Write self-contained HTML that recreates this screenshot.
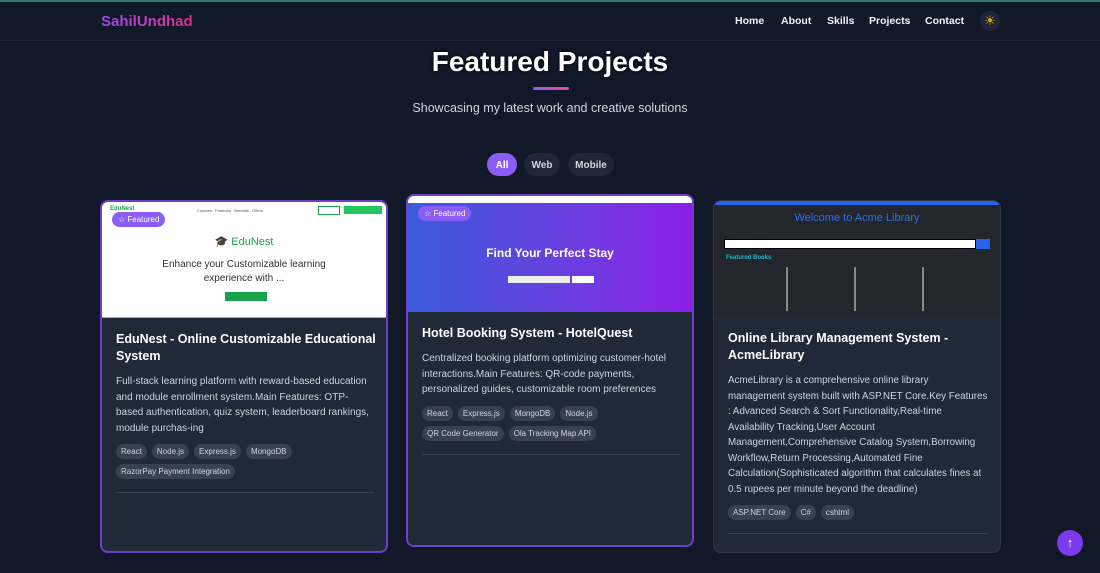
<!DOCTYPE html>
<html><head><meta charset="utf-8"><style>
*{box-sizing:border-box;margin:0;padding:0}
body{width:1100px;height:573px;overflow:hidden;background:#111827;font-family:"Liberation Sans",sans-serif;color:#e5e7eb;position:relative}
.topbar{position:absolute;top:0;left:0;right:0;height:2px;background:#2f7b7b}
.nav{position:absolute;top:2px;left:0;right:0;height:39px;border-bottom:1px solid #1f2636}
.logo{position:absolute;left:101px;top:11px;font-weight:bold;font-size:15px;background:linear-gradient(90deg,#9b4de8,#db2f8f);-webkit-background-clip:text;color:transparent}
.links{position:absolute;top:13px;font-size:10.5px;font-weight:bold;color:#f3f4f6;left:0}
.links span{position:absolute;white-space:nowrap}
.sun{position:absolute;left:980px;top:9px;width:20px;height:20px;border-radius:50%;background:#1f2637;color:#eab308;font-size:13px;text-align:center;line-height:20px}
h1{position:absolute;top:46px;left:0;right:0;text-align:center;font-size:28px;color:#fff;font-weight:bold;text-shadow:0 0 3px #000}
.ul{position:absolute;left:533px;top:87px;width:36px;height:3px;border-radius:2px;background:linear-gradient(90deg,#8b5cf6,#ec4899)}
.sub{position:absolute;top:101px;left:0;right:0;text-align:center;font-size:12.5px;color:#d1d5db}
.f{position:absolute;top:153px;height:23px;border-radius:12px;background:#1f2637;font-size:10px;font-weight:bold;color:#d1d5db;text-align:center;line-height:25px}
.card{position:absolute;width:288px;height:353px;background:#1f2937;border-radius:8px;overflow:hidden;border:1px solid #2d3748}
.card.p{border:2px solid #6d3fc7}
.img{position:absolute;left:0;top:0;right:0;height:116px;overflow:hidden}
.badge{position:absolute;left:10px;top:10px;background:#8b5cf6;color:#fff;font-size:8px;padding:3px 6px;border-radius:8px}
.body{position:absolute;left:14px;top:129px;right:12px}
.t{font-size:12.5px;font-weight:bold;color:#fff;line-height:17px;margin-bottom:9px;margin-right:-10px}
.d{font-size:10px;line-height:15.5px;color:#cbd5e1;margin-bottom:8px}
.tags{display:flex;flex-wrap:wrap;gap:5px}
.tags span{font-size:8px;background:#374151;color:#d1d5db;border-radius:8px;padding:3px 5px}
.hr{height:1px;background:#374151;margin-top:13px}
.top{position:absolute;left:1057px;top:530px;width:26px;height:26px;border-radius:50%;background:#7c3aed;color:#fff;text-align:center;line-height:26px;font-size:13px}
</style></head><body>
<div class="topbar"></div>
<div class="nav"><div class="logo">SahilUndhad</div>
<div class="links"><span style="left:735px">Home</span><span style="left:781px">About</span><span style="left:827px">Skills</span><span style="left:869px">Projects</span><span style="left:925px">Contact</span></div>
<div class="sun">☀</div></div>
<h1>Featured Projects</h1><div class="ul"></div>
<div class="sub">Showcasing my latest work and creative solutions</div>
<div class="f" style="left:487px;width:30px;background:#8b5cf6;color:#fff">All</div>
<div class="f" style="left:524px;width:36px">Web</div>
<div class="f" style="left:568px;width:46px">Mobile</div>

<div class="card p" style="left:100px;top:200px">
<div class="img" style="background:#fff;border-bottom:1px solid #aaa">
<div style="position:absolute;left:8px;top:4px;font-size:6px;color:#16a34a;font-weight:bold">EduNest</div>
<div style="position:absolute;left:95px;top:6px;font-size:4px;color:#555">Courses &nbsp; Features &nbsp; Benefits &nbsp; Offers</div>
<div style="position:absolute;left:216px;top:4px;width:22px;height:9px;border:1px solid #16a34a"></div>
<div style="position:absolute;left:242px;top:4px;width:38px;height:8px;background:#22c55e"></div>
<div style="position:absolute;left:0;right:0;top:33px;text-align:center;font-size:11px;color:#16a34a">🎓 EduNest</div>
<div style="position:absolute;left:40px;right:40px;top:56px;text-align:center;font-size:10px;line-height:14px;color:#333">Enhance your Customizable learning experience with ...</div>
<div style="position:absolute;left:123px;top:90px;width:42px;height:9px;background:#16a34a"></div>
<div class="badge">☆ Featured</div></div>
<div class="body"><div class="t">EduNest - Online Customizable Educational System</div>
<div class="d">Full-stack learning platform with reward-based education and module enrollment system.Main Features: OTP-based authentication, quiz system, leaderboard rankings, module purchas-ing</div>
<div class="tags"><span>React</span><span>Node.js</span><span>Express.js</span><span>MongoDB</span><span>RazorPay Payment Integration</span></div><div class="hr"></div></div></div>

<div class="card p" style="left:406px;top:194px">
<div class="img" style="background:linear-gradient(90deg,#3b5bdb,#6d3de0 60%,#8b1fe6)">
<div style="position:absolute;left:0;right:0;top:0;height:7px;background:#fff"></div>
<div style="position:absolute;left:0;right:0;top:50px;text-align:center;font-size:12px;font-weight:bold;color:#fff">Find Your Perfect Stay</div>
<div style="position:absolute;left:100px;top:80px;width:62px;height:7px;background:#eee"></div>
<div style="position:absolute;left:164px;top:80px;width:22px;height:7px;background:#fff"></div>
<div class="badge" style="top:10px">☆ Featured</div></div>
<div class="body"><div class="t">Hotel Booking System - HotelQuest</div>
<div class="d">Centralized booking platform optimizing customer-hotel interactions.Main Features: QR-code payments, personalized guides, customizable room preferences</div>
<div class="tags"><span>React</span><span>Express.js</span><span>MongoDB</span><span>Node.js</span><span>QR Code Generator</span><span>Ola Tracking Map API</span></div><div class="hr"></div></div></div>

<div class="card" style="left:713px;top:200px">
<div class="img" style="background:#23262d;border-top:4px solid #2563eb">
<div style="position:absolute;left:0;right:0;top:7px;text-align:center;font-size:11px;color:#2f6fe8">Welcome to Acme Library</div>
<div style="position:absolute;left:10px;top:34px;width:252px;height:10px;background:#fff;border:1px solid #000"></div>
<div style="position:absolute;left:262px;top:34px;width:14px;height:10px;background:#2563eb"></div>
<div style="position:absolute;left:12px;top:50px;font-size:6px;font-weight:bold;color:#22b8cf">Featured Books</div>
<div style="position:absolute;left:12px;top:62px;width:62px;height:44px;border-right:2px solid #888"></div>
<div style="position:absolute;left:80px;top:62px;width:62px;height:44px;border-right:2px solid #888"></div>
<div style="position:absolute;left:148px;top:62px;width:62px;height:44px;border-right:2px solid #888"></div>
</div>
<div class="body"><div class="t">Online Library Management System - AcmeLibrary</div>
<div class="d" style="font-size:9.8px">AcmeLibrary is a comprehensive online library management system built with ASP.NET Core.Key Features : Advanced Search &amp; Sort Functionality,Real-time Availability Tracking,User Account Management,Comprehensive Catalog System,Borrowing Workflow,Return Processing,Automated Fine Calculation(Sophisticated algorithm that calculates fines at 0.5 rupees per minute beyond the deadline)</div>
<div class="tags"><span>ASP.NET Core</span><span>C#</span><span>cshtml</span></div><div class="hr"></div></div></div>

<div class="top">↑</div>
</body></html>
